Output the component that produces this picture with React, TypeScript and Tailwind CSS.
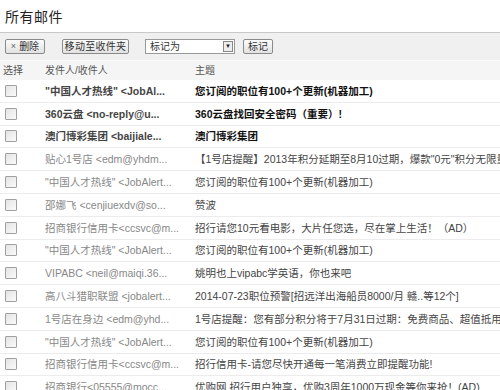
import React from 'react';

type Mail = { from: string; subject: string; bold?: boolean };

const mails: Mail[] = [
    { from: '"中国人才热线" <JobAl...', subject: '您订阅的职位有100+个更新(机器加工)', bold: true },
    { from: '360云盘 <no-reply@u...', subject: '360云盘找回安全密码（重要）!', bold: true },
    { from: '澳门博彩集团 <baijiale...', subject: '澳门博彩集团', bold: true },
    { from: '贴心1号店 <edm@yhdm...', subject: '【1号店提醒】2013年积分延期至8月10过期，爆款"0元"积分无限量畅兑' },
    { from: '"中国人才热线" <JobAlert...', subject: '您订阅的职位有100+个更新(机器加工)' },
    { from: '邵娜飞 <cenjiuexdv@so...', subject: '赞波' },
    { from: '招商银行信用卡<ccsvc@m...', subject: '招行请您10元看电影，大片任您选，尽在掌上生活！（AD）' },
    { from: '"中国人才热线" <JobAlert...', subject: '您订阅的职位有100+个更新(机器加工)' },
    { from: 'VIPABC <neil@maiqi.36...', subject: '姚明也上vipabc学英语，你也来吧' },
    { from: '高八斗猎职联盟 <jobalert...', subject: '2014-07-23职位预警[招远洋出海船员8000/月 赣..等12个]' },
    { from: '1号店在身边 <edm@yhd...', subject: '1号店提醒：您有部分积分将于7月31日过期：免费商品、超值抵用券等你来兑' },
    { from: '"中国人才热线" <JobAlert...', subject: '您订阅的职位有100+个更新(机器加工)' },
    { from: '招商银行信用卡<ccsvc@m...', subject: '招行信用卡-请您尽快开通每一笔消费立即提醒功能!' },
    { from: '招商银行<05555@mocc...', subject: '优购网 招行用户独享，优购3周年1000万现金等你来抢！(AD)' },
];

const font = { fontFamily: '"Liberation Sans", "Noto Sans CJK SC", sans-serif' };

const Checkbox = () => (
    <div className="w-[12px] h-[12px] border border-[#a0a0a0] bg-gradient-to-br from-[#e4e4e4] to-[#fafafa] rounded-[1px]"></div>
);

const Button = ({ children, className = '' }: { children: React.ReactNode; className?: string }) => (
    <button className={`shrink-0 whitespace-nowrap h-[15px] flex items-center justify-center border border-[#8a8a8a] rounded-[2px] bg-gradient-to-b from-[#fbfbfb] to-[#e2e2e2] text-[10px] leading-none text-[#333] ${className}`}>
        {children}
    </button>
);

const App: React.FC = () => {
    return (
        <div className="w-[500px] h-[390px] overflow-hidden bg-white text-[10px] text-[#333]" style={font}>
            <div className="h-[32px] pl-[5px] pt-[8px] text-[14px] leading-[18px] tracking-[0.5px] text-[#222]">所有邮件</div>

            <div className="h-[28px] border-t border-[#c8c8c8] bg-[#f0f0f0] flex items-center pl-[5px] whitespace-nowrap">
                <Button className="w-[40px] gap-[3px]"><span className="text-[9px] text-[#666]">×</span>删除</Button>
                <Button className="w-[67px] ml-[17px] tracking-[0.3px]">移动至收件夹</Button>
                <div className="shrink-0 ml-[16px] w-[90px] h-[15px] border border-[#999] bg-white flex items-center">
                    <span className="flex-1 pl-[4px] text-[10px] leading-none text-[#333]">标记为</span>
                    <span className="w-[10px] h-[11px] mr-[1px] border border-[#888] bg-[#eee] flex items-center justify-center text-[6px] text-[#222]">▼</span>
                </div>
                <Button className="w-[30px] ml-[8px]">标记</Button>
            </div>

            <div className="h-[20px] bg-[#f5f5f5] border-t border-[#fafafa] flex items-center text-[10px] leading-[14px] text-[#555]">
                <div className="w-[45px] pl-[3px]">选择</div>
                <div className="w-[150px]">发件人/收件人</div>
                <div className="flex-1">主题</div>
            </div>

            {mails.map((m, i) => (
                <div key={i} className="h-[22.8px] flex items-center border-b border-[#ececec] whitespace-nowrap leading-[14px]">
                    <div className="w-[45px] shrink-0 pl-[5px] flex items-center"><Checkbox /></div>
                    <div className={`w-[148px] shrink-0 overflow-hidden mr-[2px] text-[10.5px] ${m.bold ? 'font-bold text-[#444]' : 'text-[#888]'}`}>{m.from}</div>
                    <div className={`flex-1 min-w-0 overflow-hidden text-[10.5px] ${m.bold ? 'font-bold text-[#111]' : 'text-[#444]'}`}>{m.subject}</div>
                </div>
            ))}
        </div>
    );
};

export default App;
